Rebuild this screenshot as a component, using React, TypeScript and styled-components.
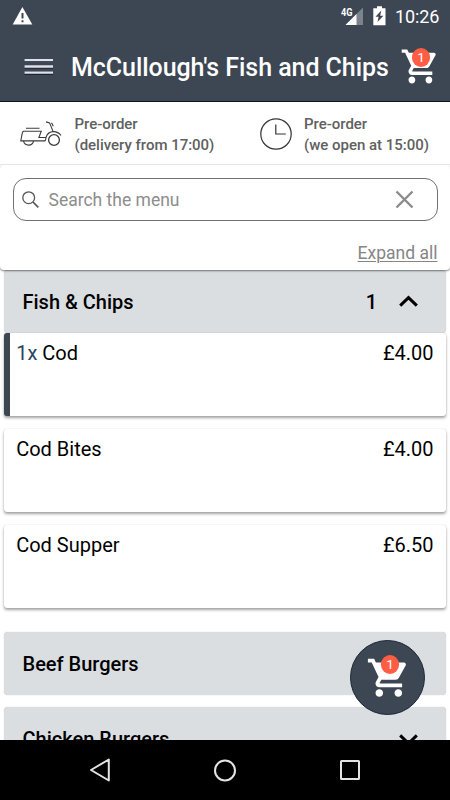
import React from "react";
import styled, { createGlobalStyle } from "styled-components";

const slate = "#3d4653";

const GlobalStyle = createGlobalStyle`
  * { box-sizing: border-box; }
  body { margin: 0; background: #fff; font-family: Roboto, "Liberation Sans", sans-serif; }
  svg { display: block; flex: none; }
`;

const Screen = styled.div`
  position: relative;
  width: 450px;
  height: 800px;
  overflow: hidden;
  display: flex;
  flex-direction: column;
  background: #fff;
  color: #000;
`;

const Header = styled.header`
  flex: none;
  height: 102px;
  background: ${slate};
  border-bottom: 1px solid #0b1524;
  color: #fff;
`;

const StatusBar = styled.div`
  display: flex;
  align-items: center;
  height: 32px;
  padding: 0 10px 0 12px;
`;

const StatusIcons = styled.div`
  margin-left: auto;
  display: flex;
  align-items: center;
  gap: 9px;
`;

const Clock = styled.span`
  width: 45px;
  font-size: 18px;
  line-height: 33px;
  letter-spacing: -0.1px;
  white-space: nowrap;
`;

const Toolbar = styled.div`
  display: flex;
  height: 69px;
  padding-left: 24px;
`;

const MenuButton = styled.button`
  display: flex;
  align-items: flex-start;
  width: 47px;
  padding: 26px 0 0;
  border: 0;
  background: none;
`;

const Title = styled.h1`
  width: 329px;
  margin: 0;
  font-size: 25px;
  line-height: 71px;
  font-weight: 500;
  letter-spacing: -0.06px;
  white-space: nowrap;
`;

const CartBox = styled.div`
  position: relative;
  width: 41px;
  padding-top: 13.6px;
`;

const Badge = styled.span<{ $left: number; $top: number }>`
  position: absolute;
  left: ${(p) => p.$left}px;
  top: ${(p) => p.$top}px;
  width: 18.6px;
  height: 18.6px;
  border-radius: 50%;
  background: #ff5e45;
  color: #fff;
  font-size: 13.5px;
  line-height: 18.6px;
  text-align: center;
`;

const InfoRow = styled.section`
  flex: none;
  display: flex;
  height: 63px;
  padding-left: 20px;
  border-bottom: 1px solid #e6e6e6;
`;

const Info = styled.div<{ $width: number; $gap: number }>`
  display: flex;
  gap: ${(p) => p.$gap}px;
  width: ${(p) => p.$width}px;
`;

const InfoText = styled.p`
  margin: 12px 0 0;
  color: #606060;
  font-size: 15px;
  line-height: 20.5px;
  font-weight: 500;
  letter-spacing: -0.02px;
  white-space: nowrap;
`;

const InfoIcon = styled.div<{ $top: number }>`
  padding-top: ${(p) => p.$top}px;
`;

const SearchPanel = styled.section`
  position: relative;
  z-index: 1;
  flex: none;
  height: 105px;
  padding: 12.5px 12.5px 0;
  background: #fff;
  border-radius: 4px;
  box-shadow: 0 1px 2px rgba(0, 0, 0, 0.5);
  clip-path: inset(0 0 -4px 0);
`;

const SearchField = styled.div`
  display: flex;
  align-items: center;
  height: 43.5px;
  padding: 0 22.5px 0 8.5px;
  border: 1px solid #707070;
  border-radius: 13px;
`;

const SearchHint = styled.span`
  flex: 1;
  margin-left: 9.5px;
  padding-top: 2px;
  color: #8d8d8d;
  font-size: 17.5px;
  line-height: 24px;
`;

const ExpandAll = styled.a`
  display: block;
  margin-top: 21px;
  color: #858585;
  font-size: 17.5px;
  line-height: 22px;
  text-align: right;
  text-decoration: underline;
  text-decoration-thickness: 1px;
  text-underline-offset: 2px;
`;

const Menu = styled.main`
  flex: 1;
  min-height: 0;
  overflow: hidden;
  padding: 0 4px;
`;

const Category = styled.div<{ $top?: number }>`
  display: flex;
  align-items: center;
  height: 62.5px;
  margin-top: ${(p) => p.$top ?? 0}px;
  padding: 1px 28px 0 18.5px;
  background: #dadee1;
  border-radius: 4px;
  box-shadow: 0 0 1px rgba(0, 0, 0, 0.3);
  font-size: 20px;
  font-weight: 500;
`;

const Count = styled.span`
  margin-left: auto;
  margin-right: 22px;
`;

const ChevronSlot = styled.span`
  margin-left: auto;
`;

const Item = styled.div<{ $selected?: boolean; $top?: number }>`
  display: flex;
  justify-content: space-between;
  width: 442px;
  height: 83.4px;
  margin-top: ${(p) => p.$top ?? 12.4}px;
  padding: 8px 12.5px 0 ${(p) => (p.$selected ? 6.2 : 12.2)}px;
  border-left: ${(p) => (p.$selected ? `6px solid ${slate}` : "0")};
  border-radius: 3px;
  background: #fff;
  box-shadow: 0 2px 3px rgba(0, 0, 0, 0.36), 0 0 1px rgba(0, 0, 0, 0.2);
  font-size: 20px;
  line-height: 24px;
`;

const Quantity = styled.span`
  color: #2a435f;
`;

const FloatingCart = styled.button`
  position: absolute;
  z-index: 2;
  left: 350px;
  top: 640px;
  display: flex;
  align-items: flex-start;
  width: 75px;
  height: 75px;
  padding: 13.5px 0 0 15.4px;
  border: 1px solid #1b2637;
  border-radius: 50%;
  background: ${slate};
  font-family: inherit;
`;

const NavBar = styled.nav`
  position: relative;
  z-index: 1;
  flex: none;
  display: flex;
  align-items: center;
  justify-content: space-between;
  height: 60px;
  padding: 0 88.5px 0 87.5px;
  background: #000;
`;

const CartIcon = ({ size }: { size: number }) => (
  <svg width={size} height={size} viewBox="0 0 24 24" fill="#fff">
    <path d="M7 18c-1.1 0-1.99.9-1.99 2S5.9 22 7 22s2-.9 2-2-.9-2-2-2zM1 2v2h2l3.6 7.59-1.35 2.45c-.16.28-.25.61-.25.96 0 1.1.9 2 2 2h12v-2H7.42c-.14 0-.25-.11-.25-.25l.03-.12.9-1.63h7.45c.75 0 1.41-.41 1.75-1.03l3.58-6.49A1.003 1.003 0 0 0 20 4H5.21l-.94-2H1zm16 16c-1.1 0-1.99.9-1.99 2s.89 2 1.99 2 2-.9 2-2-.9-2-2-2z" />
  </svg>
);

const Chevron = ({ up }: { up?: boolean }) => (
  <svg width="19" height="13" viewBox="0 0 19 13" fill="none" stroke="#000" strokeWidth="3">
    <path d={up ? "M1.2 10.6 9.5 2.6l8.3 8" : "M1.2 2.4 9.5 10.4l8.3-8"} />
  </svg>
);

const Scooter = () => (
  <svg width="42" height="26" viewBox="0 0 42 26" fill="none" stroke="#3c3c3c" strokeWidth="1.1">
    <path d="M6 7.3h13.500M3 10.3h18.200l-2.300 6.200h7.100c1.200-4 3.800-5.900 7.300-5.900 3.400 0 6 1.400 7.700 3.900M3 10.3C1.700 13 1.400 17 .8 19.900H25c.8-1 .8-2.200 1-3.400" />
    <path d="M3.500 19.900c.6 2.900 2.400 4.200 5 4.200s4.600-1.300 5-4.200M26 .9l3.600 1 3.500 8.700M31.500 1.700l1.800 3.600" />
    <circle cx="34" cy="19" r="5.400" strokeWidth="1.300" />
  </svg>
);

const items = [
  { name: "Cod", price: "£4.00", quantity: 1 },
  { name: "Cod Bites", price: "£4.00" },
  { name: "Cod Supper", price: "£6.50" },
];

export default function App() {
  return (
    <Screen>
      <GlobalStyle />
      <Header>
        <StatusBar>
          <svg width="21" height="18" viewBox="0 0 21 18">
            <path d="M10.4 0 20.3 17.5H.7Z" fill="#fff" />
            <path d="M9.5 6h2v5.500h-2zM9.500 13.200h2v2h-2z" fill={slate} />
          </svg>
          <StatusIcons>
            <svg width="24" height="20" viewBox="0 0 24 20">
              <path d="M23 1.500v17.500H5.500Z" fill="#7c838c" />
              <path d="M16.500 8V19h-11Z" fill="#fff" />
              <text x="1" y="9.500" fontSize="11.500" fontWeight="700" textLength="11.500" lengthAdjust="spacingAndGlyphs" fill="#fff">4G</text>
            </svg>
            <svg width="13" height="20" viewBox="0 0 13 20">
              <path d="M4 .3h5v2h3.500v17H.3v-17H4Z" fill="#fff" />
              <path d="M8.300 4.500 2.500 10.800h3.100L4.500 16l5.900-6.300H7.200Z" fill={slate} />
            </svg>
            <Clock>10:26</Clock>
          </StatusIcons>
        </StatusBar>
        <Toolbar>
          <MenuButton aria-label="Menu">
            <svg width="29" height="18" viewBox="0 0 29 18">
              <path d="M.5 2.600h28.500M.5 9h28.500M.5 15.200h28.500" stroke="#0c1c35" strokeWidth="3" />
              <path d="M.5 2.100h28.500M.5 8.500h28.500M.5 14.600h28.500" stroke="#e2e0e8" strokeWidth="2.300" />
            </svg>
          </MenuButton>
          <Title>McCullough's Fish and Chips</Title>
          <CartBox>
            <CartIcon size={40.8} />
            <Badge $left={11.7} $top={16}>1</Badge>
          </CartBox>
        </Toolbar>
      </Header>

      <InfoRow>
        <Info $width={240} $gap={12.5}>
          <InfoIcon $top={19}><Scooter /></InfoIcon>
          <InfoText>Pre-order<br />(delivery from 17:00)</InfoText>
        </Info>
        <Info $width={190} $gap={12}>
          <InfoIcon $top={15.5}>
            <svg width="32" height="32" viewBox="0 0 32 32" fill="none" stroke="#333" strokeWidth="1.200">
              <circle cx="16" cy="16" r="15.200" />
              <path d="M15.800 6.500V16h10" />
            </svg>
          </InfoIcon>
          <InfoText>Pre-order<br />(we open at 15:00)</InfoText>
        </Info>
      </InfoRow>

      <SearchPanel>
        <SearchField>
          <svg width="17" height="17" viewBox="0 0 17 17" fill="none" stroke="#555" strokeWidth="1.300">
            <circle cx="6.700" cy="6.700" r="5.900" />
            <path d="m11 11 5.300 5.300" strokeWidth="1.700" />
          </svg>
          <SearchHint>Search the menu</SearchHint>
          <svg width="19" height="19" viewBox="0 0 19 19" stroke="#8b8b8b" strokeWidth="2.400">
            <path d="m1.500 1.500 16 16m0-16-16 16" />
          </svg>
        </SearchField>
        <ExpandAll>Expand all</ExpandAll>
      </SearchPanel>

      <Menu>
        <Category>
          <span>Fish &amp; Chips</span>
          <Count>1</Count>
          <Chevron up />
        </Category>
        {items.map((item, i) => (
          <Item key={item.name} $selected={!!item.quantity} $top={i === 0 ? 0.5 : undefined}>
            <span>
              {item.quantity && <Quantity>{item.quantity}x </Quantity>}
              {item.name}
            </span>
            <span>{item.price}</span>
          </Item>
        ))}
        <Category $top={24.5}>
          <span>Beef Burgers</span>
          <ChevronSlot><Chevron /></ChevronSlot>
        </Category>
        <Category $top={12.5}>
          <span>Chicken Burgers</span>
          <ChevronSlot><Chevron /></ChevronSlot>
        </Category>
      </Menu>

      <FloatingCart aria-label="Cart">
        <CartIcon size={45.6} />
        <Badge $left={29.7} $top={14.4}>1</Badge>
      </FloatingCart>

      <NavBar>
        <svg width="23" height="24" viewBox="0 0 23 24" fill="none" stroke="#e4e4e4" strokeWidth="2" strokeLinejoin="round">
          <path d="M20.800 1.500v21L3 12Z" />
        </svg>
        <svg width="23" height="23" viewBox="0 0 23 23" fill="none" stroke="#e4e4e4" strokeWidth="2">
          <circle cx="12" cy="11.500" r="10" />
        </svg>
        <svg width="23" height="22" viewBox="0 0 23 22" fill="none" stroke="#e4e4e4" strokeWidth="2">
          <rect x="2" y="2" width="18" height="18" rx="0.500" />
        </svg>
      </NavBar>
    </Screen>
  );
}
